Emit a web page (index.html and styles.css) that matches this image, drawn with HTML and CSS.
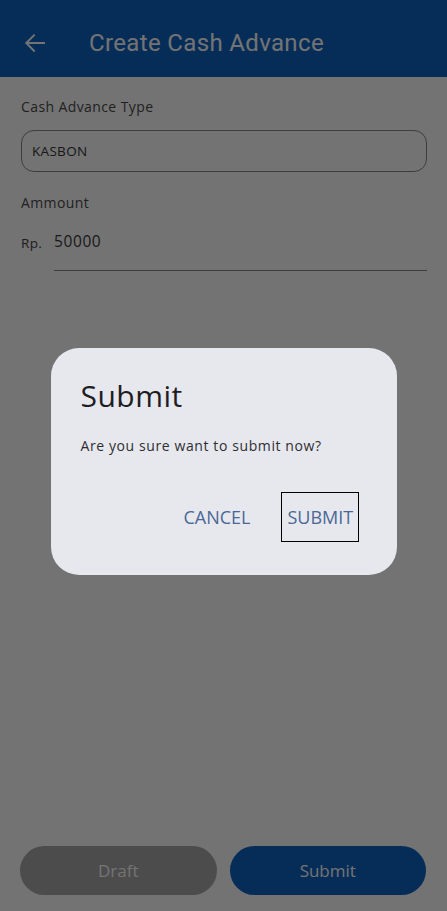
FILE: index.html
```html
<!DOCTYPE html>
<html lang="en">
<head>
<meta charset="utf-8">
<title>Create Cash Advance</title>
<link rel="stylesheet" href="styles.css">
</head>
<body>
<div class="app">
  <header class="appbar">
    <button class="back" aria-label="Back">
      <svg width="30" height="30" viewBox="0 0 24 24"><path d="M20 11.2H6.9l5.4-5.4-1.1-1.1L3.9 12l7.3 7.3 1.1-1.1-5.4-5.4H20z" fill="currentColor"/></svg>
    </button>
    <h1 class="title">Create Cash Advance</h1>
  </header>
  <main class="form">
    <label class="label">Cash Advance Type</label>
    <div class="select">KASBON</div>
    <label class="label amount-label">Ammount</label>
    <div class="amount-row">
      <span class="prefix">Rp.</span>
      <div class="amount-input">50000</div>
    </div>
  </main>
  <footer class="actions">
    <button class="btn draft">Draft</button>
    <button class="btn primary">Submit</button>
  </footer>
</div>
<div class="backdrop">
  <div class="dialog">
    <h2 class="dialog-title">Submit</h2>
    <p class="dialog-text">Are you sure want to submit now?</p>
    <div class="dialog-actions">
      <button class="text-btn">CANCEL</button>
      <button class="text-btn focused">SUBMIT</button>
    </div>
  </div>
</div>
</body>
</html>
```
FILE: styles.css
```css
* { box-sizing: border-box; }
html, body { margin: 0; padding: 0; }
body {
  width: 447px;
  height: 911px;
  background: #ffffff;
  font-family: "Open Sans", "Noto Sans", sans-serif;
  overflow: hidden;
  position: relative;
}
.app {
  height: 911px;
  display: flex;
  flex-direction: column;
}
.appbar {
  height: 77px;
  background: #0d64c4;
  display: flex;
  align-items: center;
  padding: 8px 0 0 20px;
  flex-shrink: 0;
}
.back {
  background: none;
  border: 0;
  padding: 0;
  color: #ffffff;
  width: 30px;
  height: 30px;
  display: flex;
  align-items: center;
  justify-content: center;
}
.title {
  margin: 0 0 0 39px;
  font-family: Roboto, sans-serif;
  font-weight: 400;
  font-size: 24px;
  letter-spacing: 0.35px;
  color: #ffffff;
}
.form {
  flex: 1;
  padding: 23px 20px 0 21px;
  display: flex;
  flex-direction: column;
}
.label {
  font-size: 14px;
  color: #4a4a4a;
  letter-spacing: 0.4px;
  line-height: 14px;
}
.select {
  margin-top: 16px;
  height: 42px;
  border: 1.5px solid #888888;
  border-radius: 13px;
  display: flex;
  align-items: center;
  padding-left: 10px;
  font-size: 13.5px;
  color: #333;
  letter-spacing: 0.3px;
}
.amount-label { margin-top: 24px; }
.amount-row {
  margin-top: 22px;
  display: flex;
  align-items: flex-start;
}
.prefix {
  font-size: 13.5px;
  color: #444;
  width: 33px;
  margin-top: 2px;
  letter-spacing: 0.3px;
}
.amount-input {
  flex: 1;
  height: 39px;
  border-bottom: 1.5px solid #888888;
  font-size: 15.5px;
  color: #3a3a3a;
  letter-spacing: 0.6px;
  line-height: 18px;
}
.actions {
  display: flex;
  gap: 13px;
  padding: 0 21px 16px 20px;
}
.btn {
  flex: 1;
  height: 49px;
  border-radius: 25px;
  border: 0;
  font-family: "Open Sans", sans-serif;
  font-size: 17px;
  color: #ffffff;
}
.draft { background: #a8a8a8; color: #ffffff; }
.primary { background: #0d64c4; color: #ffffff; }

.backdrop {
  position: absolute;
  inset: 0;
  background: rgba(0,0,0,0.55);
  display: flex;
  justify-content: center;
  align-items: flex-start;
  padding-top: 348px;
}
.dialog {
  width: 346px;
  height: 227px;
  background: #e6e8ee;
  border-radius: 28px;
  padding: 28px 38px 0 30px;
  display: flex;
  flex-direction: column;
}
.dialog-title {
  margin: 0;
  font-size: 30px;
  font-weight: 400;
  color: #1d1d22;
  line-height: 40px;
  letter-spacing: 0.5px;
}
.dialog-text {
  margin: 21px 0 0;
  font-size: 14px;
  color: #2e2e33;
  letter-spacing: 0.6px;
  line-height: 18px;
}
.dialog-actions {
  margin-top: 37px;
  display: flex;
  justify-content: flex-end;
  align-items: center;
  gap: 26px;
}
.text-btn {
  background: none;
  border: 1px solid transparent;
  font-family: "Open Sans", sans-serif;
  font-size: 18px;
  color: #4a6796;
  padding: 0 6px;
  height: 50px;
  width: 78px;
}
.focused { border-color: #000; }
```
